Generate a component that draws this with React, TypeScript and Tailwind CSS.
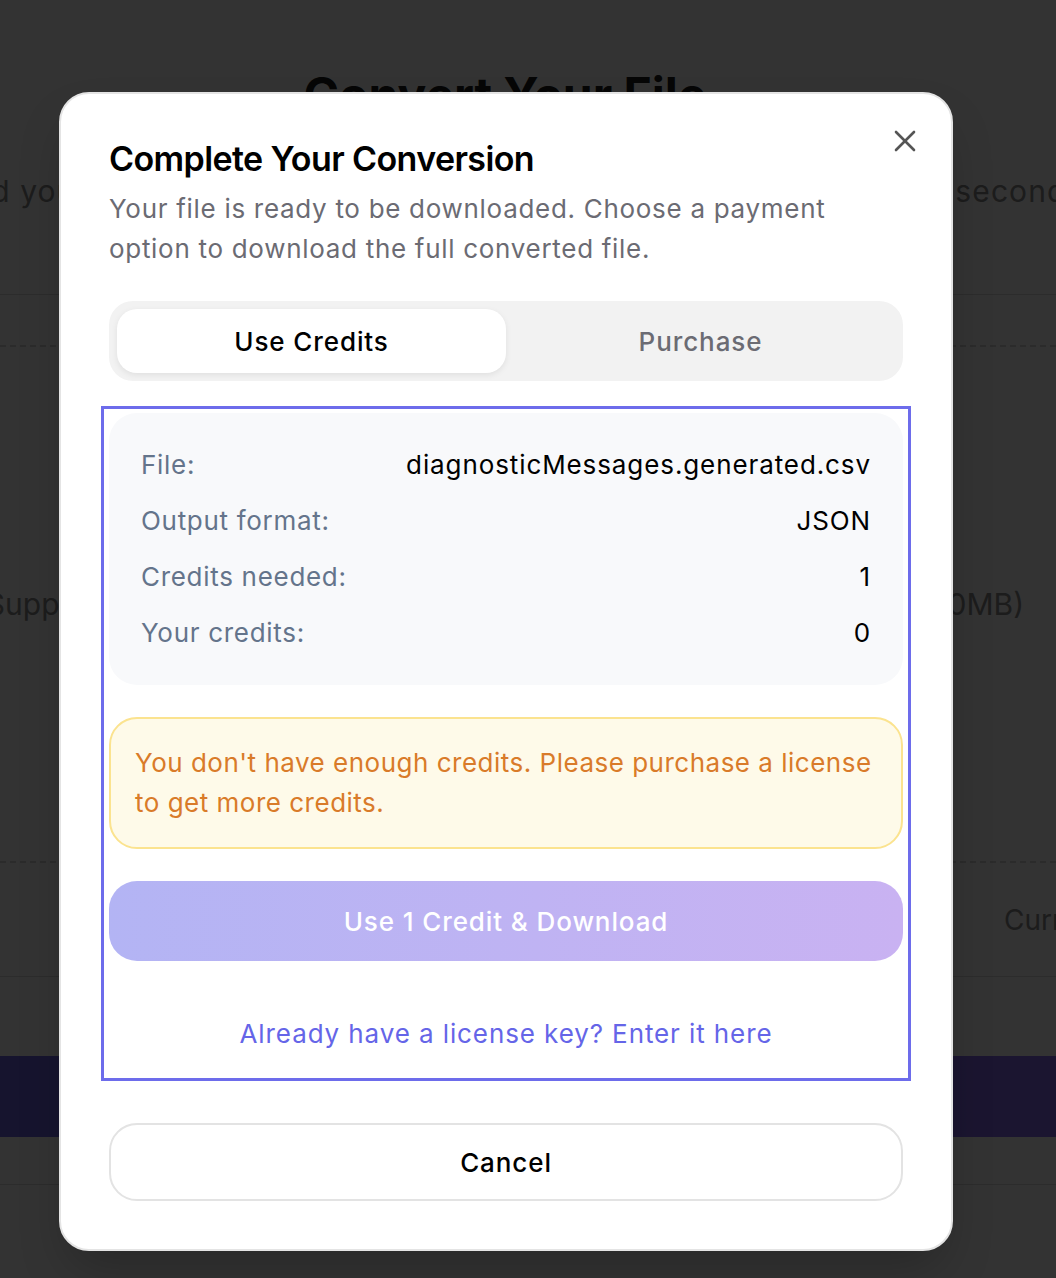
import React from 'react';
import { X } from 'lucide-react';

const rows = [
  { label: 'File:', value: 'diagnosticMessages.generated.csv' },
  { label: 'Output format:', value: 'JSON' },
  { label: 'Credits needed:', value: '1' },
  { label: 'Your credits:', value: '0' },
];

const PageBehind = () => (
  <div className="flex w-[1010px] flex-col">
    <div className="h-[71px]" />
    <h1 className="text-center text-[48px] font-bold leading-[48px] text-[#222]">Convert Your File</h1>
    <div className="h-[52px]" />
    <div className="flex h-[40px] items-center justify-center pr-[24px]">
      <p className="whitespace-nowrap text-[30px] tracking-[1.1px] text-[#8c8c8c]">
        Upload your file and we will convert it to another format in just a few seconds
      </p>
    </div>
    <div className="h-[84px] w-[1056px] border-b border-[#dcdcdc]" />
    <div className="mt-[50px] flex h-[518px] w-[1056px] flex-col justify-center border-y-2 border-dashed border-[#d4d4d4]">
      <div className="flex w-[1010px] justify-center">
        <p className="whitespace-nowrap text-[30px] text-[#8c8c8c]">
          Supported formats: CSV, JSON, XML, YAML, Excel, Parquet (Max 100MB)
        </p>
      </div>
    </div>
    <div className="flex h-[114px] w-[1056px] items-center border-b border-[#dcdcdc]">
      <span className="ml-[1004px] whitespace-nowrap text-[28px] text-[#8c8c8c]">Current plan</span>
    </div>
    <div className="h-[79px]" />
    <div className="h-[81px] w-[1056px] bg-gradient-to-r from-[#6e64e6] to-[#8769f0]" />
    <div className="h-[48px] w-[1056px] border-b border-[#dcdcdc]" />
  </div>
);

export default function App() {
  return (
    <div
      className="relative h-[1278px] w-full overflow-hidden bg-white"
      style={{ fontFamily: 'Inter, "Noto Sans", sans-serif' }}
    >
      <PageBehind />

      <div className="absolute inset-0 bg-black/80" />

      <div className="absolute left-[59px] top-[92px] w-[894px] rounded-[30px] border-2 border-[#e4e4e4] bg-white px-[48px] pb-[48px] pt-[43px] tracking-[0.9px] shadow-2xl">
        <button className="absolute right-[28px] top-[29px] text-[#555]">
          <X size={36} strokeWidth={1.75} />
        </button>

        <h2 className="text-[34px] font-semibold leading-[44px] tracking-[-0.6px] text-black">
          Complete Your Conversion
        </h2>
        <p className="mt-2 text-[26px] leading-[40px] tracking-[0.7px] text-[#6b6b73]">
          Your file is ready to be downloaded. Choose a payment option to download the full converted file.
        </p>

        <div className="mt-8 grid h-20 grid-cols-2 rounded-[24px] bg-[#f2f2f2] p-2">
          <button className="rounded-[20px] bg-white text-[26px] font-medium text-black shadow-[0_2px_6px_rgba(0,0,0,0.08)]">
            Use Credits
          </button>
          <button className="rounded-[20px] text-[26px] font-medium text-[#6b6b73]">Purchase</button>
        </div>

        <div className="-mx-2 mt-[25px] border-[3px] border-[#6d6ceb] px-[5px] pb-6 pt-1">
          <div className="flex flex-col gap-4 rounded-[28px] bg-[#f8f9fb] p-8">
            {rows.map((row) => (
              <div key={row.label} className="flex items-center justify-between text-[26px] leading-10">
                <span className="tracking-[0.7px] text-[#64748b]">{row.label}</span>
                <span className="text-black">{row.value}</span>
              </div>
            ))}
          </div>

          <div className="mt-8 rounded-[28px] border-2 border-[#fbe38f] bg-[#fefae9] px-6 py-6">
            <p className="text-[26px] leading-10 tracking-[0.5px] text-[#d97b29]">
              You don't have enough credits. Please purchase a license to get more credits.
            </p>
          </div>

          <button className="mt-8 flex h-20 w-full items-center justify-center rounded-[28px] bg-gradient-to-r from-[#b3b4f4] to-[#c9b2f2] text-[26px] font-medium text-white">
            Use 1 Credit &amp; Download
          </button>

          <p className="mt-[53px] text-center text-[26px] leading-10 text-[#6565e8]">
            Already have a license key? Enter it here
          </p>
        </div>

        <button className="mt-[42px] flex h-[78px] w-full items-center justify-center rounded-[28px] border-2 border-[#e3e3e3] bg-white text-[26px] font-medium text-black">
          Cancel
        </button>
      </div>
    </div>
  );
}
